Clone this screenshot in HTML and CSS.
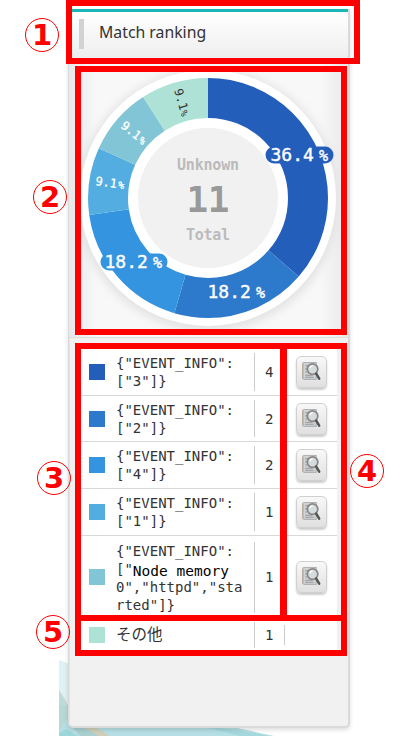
FILE: index.html
```
<!DOCTYPE html>
<html lang="ja">
<head>
<meta charset="utf-8">
<title>Match ranking</title>
<link rel="stylesheet" href="styles.css">
</head>
<body>
<svg class="backdrop" width="250" height="86" viewBox="59 650 250 86" aria-hidden="true">
  <path d="M59 660L70 664V736H59Z" fill="#dff1f4"/>
  <path d="M59 690Q64 697 69 707V736H59Z" fill="#d5d3c3"/>
  <path d="M59 692Q64 698 69 710V736H59Z" fill="#bcdcdb"/>
  <path d="M59 705H69V722L84 736H59Z" fill="#b7d8d3"/>
  <path d="M66 720H200L274 736H59V732Z" fill="#b5dfe4"/>
  <path d="M59 733L66 729L78 736H59Z" fill="#9ed5da"/>
  <path d="M70 724H84L103 736H80Z" fill="#a9cfcf"/>
  <path d="M81 726H93L110 736H99Z" fill="#d0ceb9"/>
  <path d="M200 726Q235 729 269 736H240Z" fill="#a5d8dd"/>
</svg>

<main class="panel">
  <header class="panel-header"><span class="grip"></span><h1>Match ranking</h1></header>
  <section class="chart">
    <svg width="272" height="272" viewBox="72 64 272 272">
      <defs><filter id="soft" x="-20%" y="-20%" width="140%" height="140%"><feGaussianBlur stdDeviation="5"/></filter></defs>
      <circle cx="208" cy="200" r="131" fill="#e2e2e2" filter="url(#soft)"/>
      <circle cx="208" cy="198" r="128" fill="#fff"/>
      <circle cx="208" cy="198" r="70" fill="#f1f1f1"/>
      <g class="ring" transform="rotate(-90 208 198)">
        <circle cx="208" cy="198" r="100" pathLength="11" stroke="#245ebb" stroke-dasharray="4 7"/>
        <circle cx="208" cy="198" r="100" pathLength="11" stroke="#2d79cc" stroke-dasharray="2 9" stroke-dashoffset="-4"/>
        <circle cx="208" cy="198" r="100" pathLength="11" stroke="#3594df" stroke-dasharray="2 9" stroke-dashoffset="-6"/>
        <circle cx="208" cy="198" r="100" pathLength="11" stroke="#54ade0" stroke-dasharray="1 10" stroke-dashoffset="-8"/>
        <circle cx="208" cy="198" r="100" pathLength="11" stroke="#82c5d6" stroke-dasharray="1 10" stroke-dashoffset="-9"/>
        <circle cx="208" cy="198" r="100" pathLength="11" stroke="#aee2d6" stroke-dasharray="1 10" stroke-dashoffset="-10"/>
      </g>
      <g class="halo">
        <path d="M274 155H325" stroke="#245ebb"/>
        <path d="M109 262H159" stroke="#3594df"/>
      </g>
      <g class="label">
        <text x="270.5" y="161">36.4<tspan class="pct" x="319">%</tspan></text>
        <text x="207.5" y="298">18.2<tspan class="pct" x="256">%</tspan></text>
        <text x="104.5" y="268">18.2<tspan class="pct" x="153">%</tspan></text>
      </g>
      <g class="small-label">
        <text transform="translate(95 185) rotate(8)">9.1<tspan class="tiny" x="23">%</tspan></text>
        <text transform="translate(120 127) rotate(39)">9.1<tspan class="tiny" x="23">%</tspan></text>
        <text class="dark" transform="translate(174 90) rotate(74)">9.1<tspan class="tiny" x="22">%</tspan></text>
      </g>
      <g class="center">
        <text x="208" y="170" textLength="62">Unknown</text>
        <text class="total" x="208" y="212" textLength="43">11</text>
        <text x="208" y="240" textLength="44">Total</text>
      </g>
    </svg>
  </section>

  <section class="ranking">
    <div class="row"><i class="swatch c1"></i><div class="name">{"EVENT_INFO":<br>["3"]}</div><b class="count">4</b><button class="detail" aria-label="Detail"><svg width="21" height="21"><use href="#lens"/></svg></button></div>
    <div class="row"><i class="swatch c2"></i><div class="name">{"EVENT_INFO":<br>["2"]}</div><b class="count">2</b><button class="detail" aria-label="Detail"><svg width="21" height="21"><use href="#lens"/></svg></button></div>
    <div class="row"><i class="swatch c3"></i><div class="name">{"EVENT_INFO":<br>["4"]}</div><b class="count">2</b><button class="detail" aria-label="Detail"><svg width="21" height="21"><use href="#lens"/></svg></button></div>
    <div class="row"><i class="swatch c4"></i><div class="name">{"EVENT_INFO":<br>["1"]}</div><b class="count">1</b><button class="detail" aria-label="Detail"><svg width="21" height="21"><use href="#lens"/></svg></button></div>
    <div class="row tall"><i class="swatch c5"></i><div class="name">{"EVENT_INFO":<br>["<span class="node">Node memory</span><br>0","httpd","sta<br>rted"]}</div><b class="count">1</b><button class="detail" aria-label="Detail"><svg width="21" height="21"><use href="#lens"/></svg></button></div>
    <div class="row other"><i class="swatch c6"></i><div class="name">その他</div><b class="count">1</b><span class="divider"></span></div>
  </section>
</main>

<svg class="defs" width="0" height="0">
  <symbol id="lens" viewBox="0 0 20 20">
    <path d="M3 1.5H14.5V17.5H3Q1.5 17.5 1.5 16V3Q1.5 1.5 3 1.5Z" fill="#d0d3d6" stroke="#b0b3b6"/>
    <path d="M1.8 2.5V16.5" stroke="#b9a994" stroke-width="1.2"/>
    <path d="M4 4.5H7M4 7.5H6M4 10.5H6M4 13.5H11M4 15.5H12" stroke="#96999c"/>
    <circle cx="11" cy="7.7" r="5" fill="#d5dce0" stroke="#8a8785" stroke-width="1.7"/>
    <path d="M8.3 7Q9 5 11 4.7" fill="none" stroke="#fff" stroke-width="1.3"/>
    <path d="M14.5 12L17.3 16.8" stroke="#555" stroke-width="2.4" stroke-linecap="round"/>
  </symbol>
</svg>

<div class="mark mark-header"></div>
<div class="mark mark-chart"></div>
<div class="mark mark-list"></div>
<div class="mark mark-buttons"></div>
<div class="mark mark-other"></div>
<span class="callout n1">1</span>
<span class="callout n2">2</span>
<span class="callout n3">3</span>
<span class="callout n4">4</span>
<span class="callout n5">5</span>
</body>
</html>
```

FILE: styles.css
```
* { box-sizing: border-box; }
body {
  position: relative;
  width: 409px;
  height: 736px;
  margin: 0;
  padding: 9px 0 0 68px;
  overflow: hidden;
  background: #fff;
  font-family: "DejaVu Sans Mono", "Noto Sans CJK JP", monospace;
  color: #333;
}
.backdrop { position: absolute; left: 59px; top: 650px; }
.defs { position: absolute; }
.panel {
  position: relative;
  width: 282px;
  height: 719px;
  background: #f1f1f1;
  border: solid #dadada;
  border-width: 0 2px 2px 1px;
  border-radius: 0 0 5px 5px;
  box-shadow: 0 2px 4px #0002, inset 1px 0 #e3e3e3;
}
.panel-header {
  display: flex;
  align-items: center;
  height: 50px;
  padding: 0 0 3px 11px;
  border-top: 3px solid #18b8b9;
  border-bottom: 1px solid #ccc;
  background: linear-gradient(#fff, #eee);
}
.grip { width: 5px; height: 30px; margin: 1px 15px 0 -1px; background: #d2d2d2; }
h1 { margin: -3px 0 0; font: 400 15.8px "Noto Sans", sans-serif; }
.chart {
  height: 279px;
  padding: 5px 0 0 3px;
  border-bottom: 1px solid #ddd;
  background: linear-gradient(90deg, #e8e8e8, #f8f8f8 10%, #f8f8f8 90%, #e8e8e8);
}
.chart svg { display: block; }
.ring circle { fill: none; stroke-width: 40; }
.label text { font-size: 18px; fill: #fff; stroke: #fff; stroke-width: .4px; }
.halo path { stroke-width: 18; stroke-linecap: round; }
.halo path { stroke-width: 17; }
.label .pct { font-size: 15px; }
.small-label text { font-size: 12px; fill: #fff; stroke: #fff; stroke-width: .3px; }
.small-label .tiny { font-size: 10px; }
.small-label .dark { fill: #333; stroke: none; }
.center text { font-size: 15px; font-weight: 700; text-anchor: middle; fill: #bbb; }
.center .total { font-size: 36px; fill: #999; }
.ranking { width: 257px; margin: 11px 0 0 11px; background: #fff; }
.row {
  display: grid;
  grid-template-columns: 27px 138px 30px 1fr;
  align-items: center;
  height: 46.7px;
  padding-left: 9px;
  border-bottom: 1.5px solid #d8d8d8;
}
.swatch { width: 16px; height: 16px; }
.c1 { background: #245ebb; }
.c2 { background: #2d79cc; }
.c3 { background: #3594df; }
.c4 { background: #54ade0; }
.c5 { background: #82c5d6; }
.c6 { background: #aee2d6; }
.name { font-size: 14px; line-height: 18px; white-space: nowrap; }
.node { position: relative; top: 2px; font-size: 14.5px; color: #000; }
.count {
  display: flex;
  align-items: center;
  align-self: stretch;
  margin: 4px 0;
  padding-left: 10px;
  border-left: 1px solid #ccc;
  font-size: 14px;
  font-weight: 400;
}
.detail {
  display: flex;
  justify-content: center;
  width: 31px;
  height: 32px;
  margin: 0 0 0 12px;
  padding: 4px 0 0;
  border: 1px solid #d0d0d0;
  border-radius: 5px;
  background: linear-gradient(#f8f8f8, #e0e0e0);
  box-shadow: 0 2px 2px #0003;
}
.detail svg { flex: none; }
.tall { height: 82px; padding-top: 2px; }
.tall .name { padding-top: 2px; }
.other { height: 34px; border: 0; }
.other .name { font-size: 15.5px; }
.divider { width: 1px; height: 20px; background: #ccc; }
.mark { position: absolute; border: 6px solid red; }
.mark-header { left: 66px; top: 0; width: 294px; height: 64px; }
.mark-chart { left: 75px; top: 66px; width: 272px; height: 269px; }
.mark-list { left: 75px; top: 343px; width: 212px; height: 278px; }
.mark-buttons { left: 280px; top: 343px; width: 67px; height: 278px; }
.mark-other { left: 75px; top: 615px; width: 272px; height: 41px; }
.callout {
  position: absolute;
  display: grid;
  place-items: center;
  width: 34px;
  height: 34px;
  border: 1.3px solid red;
  border-radius: 50%;
  color: red;
  font: 700 29px/30px "DejaVu Sans", sans-serif;
}
.n1 { left: 25px; top: 18px; }
.n2 { left: 33px; top: 180px; }
.n3 { left: 37px; top: 461px; }
.n4 { left: 350px; top: 454px; }
.n5 { left: 36px; top: 615px; }
```
